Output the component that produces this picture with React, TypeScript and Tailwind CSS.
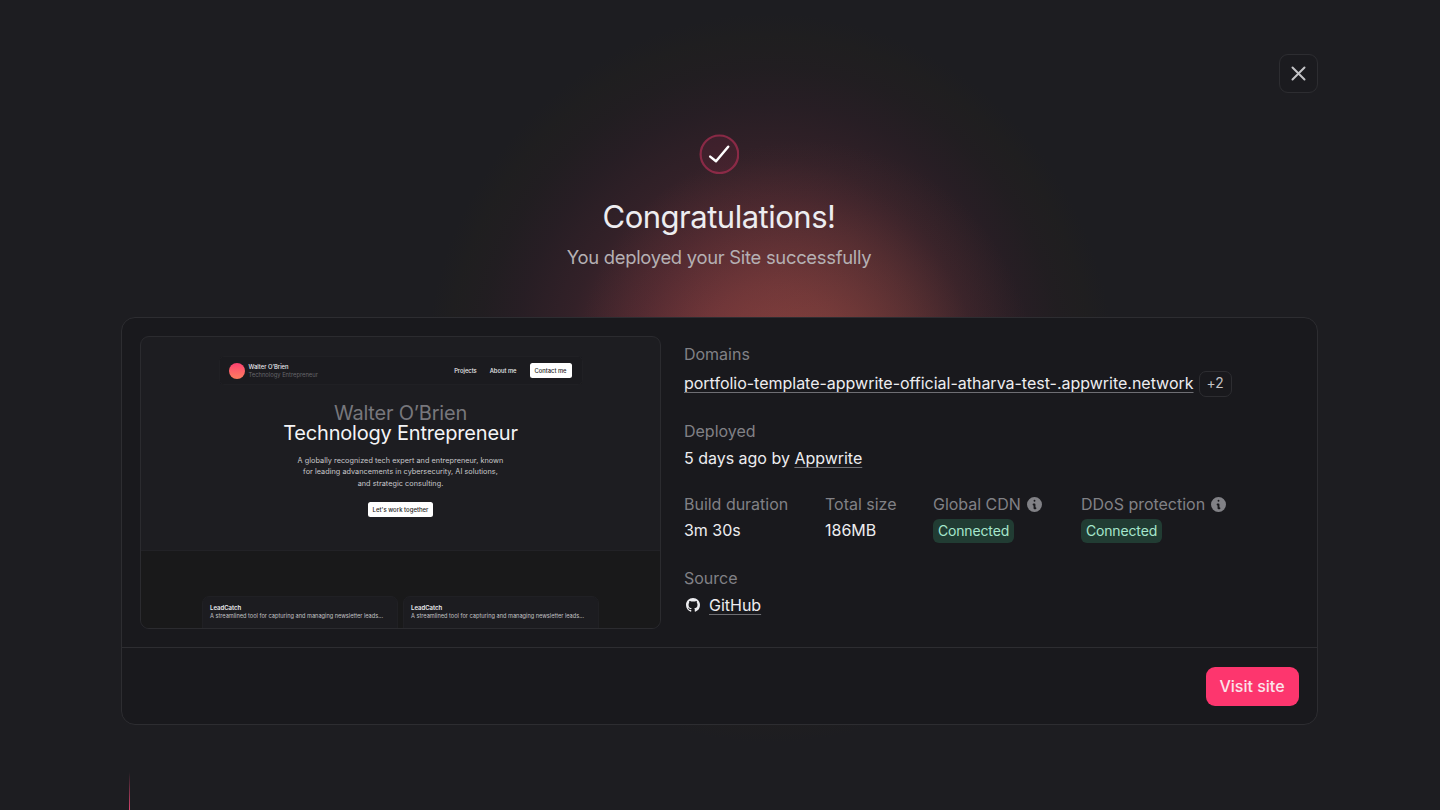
import type { ReactNode } from "react";

function Glow() {
  return (
    <div className="pointer-events-none absolute inset-0">
      <div className="absolute inset-0 bg-[radial-gradient(ellipse_345px_365px_at_770px_378px,rgba(200,66,86,0.50)_0%,rgba(190,66,82,0.42)_25%,rgba(176,62,78,0.29)_45%,rgba(150,50,72,0.18)_60%,rgba(120,36,62,0.11)_75%,rgba(64,34,34,0.12)_85%,rgba(38,34,28,0.25)_93%,rgba(30,31,34,0)_100%)]" />
      <div className="absolute inset-0 bg-[radial-gradient(ellipse_230px_230px_at_805px_370px,rgba(190,110,70,0.30)_0%,rgba(180,100,70,0.2)_40%,rgba(170,80,70,0.07)_75%,rgba(160,80,70,0)_100%)]" />
    </div>
  );
}

function CheckBadge() {
  return (
    <svg className="size-10" viewBox="0 0 40 40" fill="none">
      <circle cx="20.4" cy="20.3" r="18.8" fill="#fd366e" fillOpacity="0.08" stroke="#a52d50" strokeOpacity="0.75" strokeWidth="2.2" />
      <path d="M11.2 22.6L17 27.3L29.2 12.8" stroke="#fff" strokeWidth="2.5" strokeLinecap="round" strokeLinejoin="round" />
    </svg>
  );
}

function InfoIcon() {
  return (
    <svg className="size-[15px]" viewBox="0 0 16 16">
      <path
        fill="#818186"
        fillRule="evenodd"
        d="M16 8A8 8 0 1 1 0 8a8 8 0 0 1 16 0ZM9 4a1 1 0 1 1-2 0 1 1 0 0 1 2 0ZM7 7a1 1 0 0 0 0 2v3a1 1 0 0 0 1 1h1a1 1 0 1 0 0-2V8a1 1 0 0 0-1-1H7Z"
      />
    </svg>
  );
}

function GithubIcon() {
  return (
    <svg className="size-[14px]" viewBox="0 0 16 16" fill="#ededf0">
      <path
        fillRule="evenodd"
        d="M8 0C3.58 0 0 3.58 0 8c0 3.54 2.29 6.53 5.47 7.59.4.07.55-.17.55-.38 0-.19-.01-.82-.01-1.49-2.01.37-2.53-.49-2.69-.94-.09-.23-.48-.94-.82-1.13-.28-.15-.68-.52-.01-.53.63-.01 1.08.58 1.23.82.72 1.21 1.87.87 2.33.66.07-.52.28-.87.51-1.07-1.78-.2-3.64-.89-3.64-3.95 0-.87.31-1.59.82-2.15-.08-.2-.36-1.02.08-2.12 0 0 .67-.21 2.2.82.64-.18 1.32-.27 2-.27s1.36.09 2 .27c1.53-1.04 2.2-.82 2.2-.82.44 1.1.16 1.92.08 2.12.51.56.82 1.27.82 2.15 0 3.07-1.87 3.75-3.65 3.95.29.25.54.73.54 1.48 0 1.07-.01 1.93-.01 2.2 0 .21.15.46.55.38A8.01 8.01 0 0 0 16 8c0-4.42-3.58-8-8-8Z"
      />
    </svg>
  );
}

function Label({ children }: { children: ReactNode }) {
  return <div className="flex h-5 items-center gap-[6px] whitespace-nowrap text-[#818186]">{children}</div>;
}

function Link({ children }: { children: ReactNode }) {
  return (
    <a className="whitespace-nowrap text-[#ededf0] underline decoration-[#6e6e73] decoration-1 underline-offset-[3px]">
      {children}
    </a>
  );
}

function Connected() {
  return (
    <div className="mt-[5px] flex h-6 w-[81px] items-center justify-center rounded-[6px] bg-[#213c33] pb-px text-[14px] tracking-[-0.15px] text-[#a5e6cc]">
      Connected
    </div>
  );
}

function ProjectCard() {
  return (
    <div className="h-[60px] w-[196px] shrink-0 rounded-[7px] border border-[#202024] bg-[#1c1c20] px-[7px] pt-[6px]">
      <div className="h-[9px] text-[6px] font-semibold leading-[9px] text-[#ededf0]">LeadCatch</div>
      <div className="h-[9px] whitespace-nowrap text-[5.64px] leading-[8px] text-[#c3c3c6]">
        A streamlined tool for capturing and managing newsletter leads...
      </div>
    </div>
  );
}

function SitePreview() {
  return (
    <div className="flex h-[293px] w-[521px] shrink-0 flex-col overflow-hidden rounded-[9px] border border-[#2b2b2f] bg-[#1d1d21]">
      <div className="flex h-[213px] shrink-0 flex-col items-center pt-[19px]">
        <div className="flex h-[29px] w-[364px] items-center rounded-[5px] border border-[#202024] bg-[#1b1b1f] pl-[9px] pr-[10px]">
          <div className="size-4 rounded-full bg-linear-to-b from-[#fd3f70] to-[#fe7c5e]" />
          <div className="ml-[4px] flex-1 text-[5.8px] leading-[8px]">
            <div className="font-medium text-[#ededf0]">Walter O’Brien</div>
            <div className="text-[5.8px] text-[#66666b]">Technology Entrepreneur</div>
          </div>
          <div className="mr-[13px] pt-px text-[5.8px] font-medium text-[#ededf0]">Projects</div>
          <div className="mr-[13px] pt-px text-[5.8px] font-medium text-[#ededf0]">About me</div>
          <div className="flex h-[15px] w-[42px] items-center justify-center whitespace-nowrap rounded-[2.5px] bg-white pt-px text-[5.8px] font-medium text-[#1d1d21]">
            Contact me
          </div>
        </div>
        <div className="mt-[18px] text-center text-[20px] leading-[20px] tracking-[-0.2px]">
          <div className="text-[#77777c]">Walter O’Brien</div>
          <div className="text-[#f4f4f6]">Technology Entrepreneur</div>
        </div>
        <div className="mt-[12px] text-center text-[7.25px] leading-[11.4px] tracking-[0.05px] text-[#c9c9cc]">
          <div>A globally recognized tech expert and entrepreneur, known</div>
          <div>for leading advancements in cybersecurity, AI solutions,</div>
          <div>and strategic consulting.</div>
        </div>
        <div className="mt-[13px] flex h-[15px] w-[65px] items-center justify-center whitespace-nowrap rounded-[2.5px] bg-white text-[6px] font-medium text-[#1d1d21]">
          Let's work together
        </div>
      </div>
      <div className="flex flex-1 items-start justify-center gap-[5px] border-t border-[#222226] bg-[#19191a] pt-[45px]">
        <ProjectCard />
        <ProjectCard />
      </div>
    </div>
  );
}

function Details() {
  return (
    <div className="flex flex-col pl-[23px] pt-[8px] text-[16px] leading-5 tracking-[-0.015px] text-[#ededf0]">
      <Label>Domains</Label>
      <div className="mt-[6px] flex h-[26px] items-center gap-[5px]">
        <Link>portfolio-template-appwrite-official-atharva-test-.appwrite.network</Link>
        <div className="mt-px flex h-[26px] w-[33px] items-center justify-center rounded-[7px] border border-[#2d2d31] pb-px text-[13.8px] text-[#c3c3c6]">
          +2
        </div>
      </div>
      <div className="mt-[25px]">
        <Label>Deployed</Label>
      </div>
      <div className="mt-[7px]">
        5 days ago by <Link>Appwrite</Link>
      </div>
      <div className="mt-[26px] flex">
        <div className="w-[141px]">
          <Label>Build duration</Label>
          <div className="mt-[6px]">3m 30s</div>
        </div>
        <div className="w-[108px]">
          <Label>Total size</Label>
          <div className="mt-[6px]">186MB</div>
        </div>
        <div className="w-[148px]">
          <Label>
            Global CDN <InfoIcon />
          </Label>
          <Connected />
        </div>
        <div>
          <Label>
            DDoS protection <InfoIcon />
          </Label>
          <Connected />
        </div>
      </div>
      <div className="mt-[25px]">
        <Label>Source</Label>
      </div>
      <div className="mt-[7px] flex items-center gap-[9px] pl-[2px]">
        <GithubIcon />
        <Link>GitHub</Link>
      </div>
    </div>
  );
}

export default function App() {
  return (
    <div className="relative flex h-[810px] w-[1440px] flex-col overflow-hidden bg-[#1d1d21] font-['Inter',sans-serif]">
      <Glow />
      <header className="relative flex h-[93px] shrink-0 items-end justify-end pr-[122px]">
        <button className="flex size-[39px] items-center justify-center rounded-[9px] border border-[#2d2d31] bg-[#1b1b1f]">
          <svg className="size-[15px]" viewBox="0 0 15 15" fill="none" stroke="#c3c3c6" strokeWidth="2" strokeLinecap="round">
            <path d="M1.5 1.5L13.5 13.5M13.5 1.5L1.5 13.5" />
          </svg>
        </button>
      </header>
      <section className="relative flex h-[224px] w-[1438px] shrink-0 flex-col items-center pt-[41px]">
        <CheckBadge />
        <h1 className="mt-[23px] h-10 text-[31px] leading-10 tracking-[-0.5px] text-[#ededf0]">Congratulations!</h1>
        <p className="mt-[8px] h-6 text-[18.4px] leading-6 tracking-[-0.28px] text-[#b5b0b3]">
          You deployed your Site successfully
        </p>
      </section>
      <main className="relative ml-[121px] flex h-[408px] w-[1197px] shrink-0 flex-col rounded-[14px] border border-[#2d2d31] bg-[#19191d]">
        <div className="flex h-[329px] shrink-0 pl-[18px] pt-[18px]">
          <SitePreview />
          <Details />
        </div>
        <div className="flex flex-1 items-center justify-end border-t border-[#2d2d31] pr-[18px]">
          <button className="flex h-[39px] w-[93px] items-center justify-center rounded-[9px] bg-[#fd366e] pr-px text-[16px] font-medium text-[#fbe4ea]">
            Visit site
          </button>
        </div>
      </main>
      <div className="absolute left-[129px] top-[772px] h-[38px] w-px bg-linear-to-b from-[#c44066]/0 to-[#d8446e]" />
    </div>
  );
}
